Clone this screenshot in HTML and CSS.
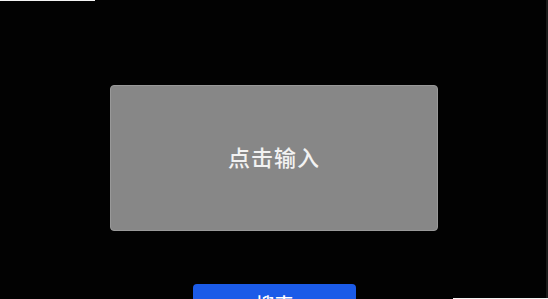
FILE: index.html
```html
<!DOCTYPE html>
<html lang="zh">
<head>
<meta charset="utf-8">
<link rel="stylesheet" href="styles.css">
</head>
<body>
<div class="page">
  <div class="top-line"></div>
  <div class="input-box">点击输入</div>
  <div class="search-btn">搜索</div>
  <div class="bottom-line"></div>
  <div class="right-edge"></div>
</div>
</body>
</html>
```
FILE: styles.css
```css
html, body {
  margin: 0;
  padding: 0;
  background: #000;
}
.page {
  position: relative;
  width: 548px;
  height: 299px;
  overflow: hidden;
  background: #020202;
  display: flex;
  flex-direction: column;
  font-family: "Noto Sans CJK SC", "Noto Sans", sans-serif;
}
.top-line {
  width: 95px;
  height: 1px;
  background: #f4f4f4;
  flex-shrink: 0;
}
.input-box {
  flex-shrink: 0;
  box-sizing: border-box;
  margin: 84px 0 0 110px;
  width: 328px;
  height: 146px;
  padding-bottom: 4px;
  border: 1px solid #999;
  border-radius: 4px;
  background: #878787;
  color: #f2f2f2;
  font-size: 22px;
  font-weight: 500;
  display: flex;
  align-items: center;
  justify-content: center;
  letter-spacing: 1px;
}
.search-btn {
  flex-shrink: 0;
  margin: 53px 0 0 193px;
  width: 163px;
  height: 44px;
  border-radius: 4px;
  background: #1b5be8;
  color: #fff;
  font-size: 19px;
  font-weight: 500;
  text-align: center;
  line-height: 40px;
}
.bottom-line {
  position: absolute;
  left: 453px;
  right: 0;
  bottom: 0;
  height: 1px;
  background: #f4f4f4;
}
.right-edge {
  position: absolute;
  top: 0;
  right: 0;
  width: 2px;
  height: 298px;
  background: #1a1a1a;
}
```
